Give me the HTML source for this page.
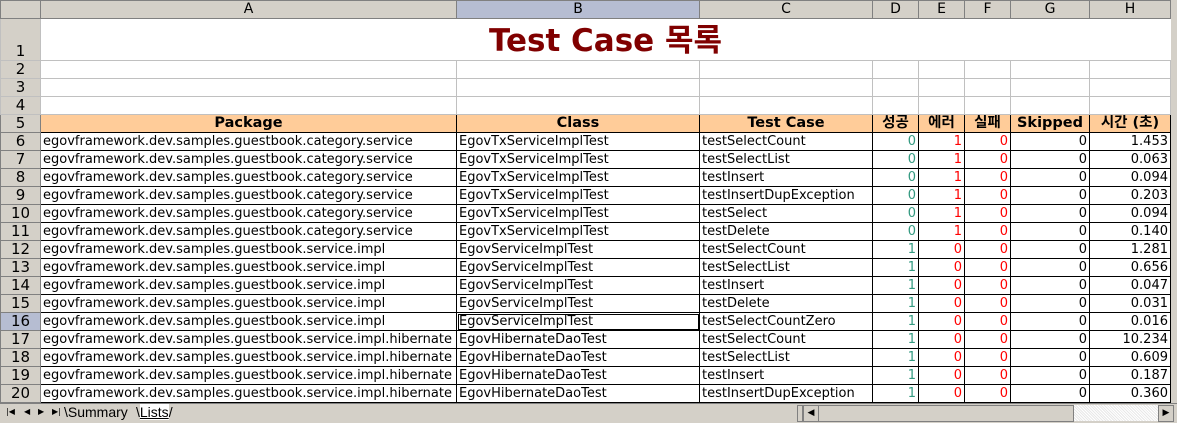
<!DOCTYPE html>
<html><head><meta charset="utf-8">
<style>
body{margin:0;width:1177px;height:422px;overflow:hidden;background:#d4d0c8;font-family:"DejaVu Sans","Noto Sans CJK KR",sans-serif;font-size:13px;}
table{position:absolute;left:0;top:0;border-collapse:collapse;table-layout:fixed;}
td{padding:0 2px;height:17px;border:1px solid #000;white-space:nowrap;overflow:hidden;line-height:17px;background:#fff;}
tr.g td{border-color:#c0c0c0;}
td.h{background:#d4d0c8;border:1px solid #808080;text-align:center;color:#000;font-size:14px;padding:0;}
td.hs{background:#b6bdd2;}
td.rh{background:#d4d0c8;border:1px solid #808080;text-align:center;font-size:15px;padding:0;}
tr.hd td.c{background:#ffcc99;font-weight:bold;text-align:center;font-size:14.5px;}
.r{text-align:right;}
.gn{color:#339980;text-align:right;}
.rd{color:#ff0000;text-align:right;}
.title{font-family:"DejaVu Sans","Noto Sans CJK KR",sans-serif;font-weight:bold;font-size:31px;color:#800000;text-align:center;vertical-align:bottom;line-height:38px;}
#bar{position:absolute;left:0;top:403px;width:1177px;height:19px;background:#d4d0c8;border-top:1px solid #808080;font-size:13px;}
</style></head><body>
<table>
<colgroup><col style="width:40px"><col style="width:416px"><col style="width:243px"><col style="width:173px"><col style="width:46px"><col style="width:46px"><col style="width:46px"><col style="width:79px"><col style="width:81px"></colgroup>
<tr><td class="h" style="height:17px"></td><td class="h">A</td><td class="h hs">B</td><td class="h">C</td><td class="h">D</td><td class="h">E</td><td class="h">F</td><td class="h">G</td><td class="h">H</td></tr>
<tr class="g"><td class="rh" style="height:41px;vertical-align:bottom">1</td><td colspan="8" class="title" style="border-color:#fff #fff #c0c0c0 #c0c0c0">Test Case 목록</td></tr>
<tr class="g"><td class="rh">2</td><td></td><td></td><td></td><td></td><td></td><td></td><td></td><td></td></tr>
<tr class="g"><td class="rh">3</td><td></td><td></td><td></td><td></td><td></td><td></td><td></td><td></td></tr>
<tr class="g"><td class="rh">4</td><td></td><td></td><td></td><td></td><td></td><td></td><td></td><td></td></tr>
<tr class="hd"><td class="rh">5</td><td class="c">Package</td><td class="c">Class</td><td class="c">Test Case</td><td class="c">성공</td><td class="c">에러</td><td class="c">실패</td><td class="c">Skipped</td><td class="c">시간 (초)</td></tr>
<tr><td class="rh">6</td><td>egovframework.dev.samples.guestbook.category.service</td><td>EgovTxServiceImplTest</td><td>testSelectCount</td><td class="gn">0</td><td class="rd">1</td><td class="rd">0</td><td class="r">0</td><td class="r">1.453</td></tr>
<tr><td class="rh">7</td><td>egovframework.dev.samples.guestbook.category.service</td><td>EgovTxServiceImplTest</td><td>testSelectList</td><td class="gn">0</td><td class="rd">1</td><td class="rd">0</td><td class="r">0</td><td class="r">0.063</td></tr>
<tr><td class="rh">8</td><td>egovframework.dev.samples.guestbook.category.service</td><td>EgovTxServiceImplTest</td><td>testInsert</td><td class="gn">0</td><td class="rd">1</td><td class="rd">0</td><td class="r">0</td><td class="r">0.094</td></tr>
<tr><td class="rh">9</td><td>egovframework.dev.samples.guestbook.category.service</td><td>EgovTxServiceImplTest</td><td>testInsertDupException</td><td class="gn">0</td><td class="rd">1</td><td class="rd">0</td><td class="r">0</td><td class="r">0.203</td></tr>
<tr><td class="rh">10</td><td>egovframework.dev.samples.guestbook.category.service</td><td>EgovTxServiceImplTest</td><td>testSelect</td><td class="gn">0</td><td class="rd">1</td><td class="rd">0</td><td class="r">0</td><td class="r">0.094</td></tr>
<tr><td class="rh">11</td><td>egovframework.dev.samples.guestbook.category.service</td><td>EgovTxServiceImplTest</td><td>testDelete</td><td class="gn">0</td><td class="rd">1</td><td class="rd">0</td><td class="r">0</td><td class="r">0.140</td></tr>
<tr><td class="rh">12</td><td>egovframework.dev.samples.guestbook.service.impl</td><td>EgovServiceImplTest</td><td>testSelectCount</td><td class="gn">1</td><td class="rd">0</td><td class="rd">0</td><td class="r">0</td><td class="r">1.281</td></tr>
<tr><td class="rh">13</td><td>egovframework.dev.samples.guestbook.service.impl</td><td>EgovServiceImplTest</td><td>testSelectList</td><td class="gn">1</td><td class="rd">0</td><td class="rd">0</td><td class="r">0</td><td class="r">0.656</td></tr>
<tr><td class="rh">14</td><td>egovframework.dev.samples.guestbook.service.impl</td><td>EgovServiceImplTest</td><td>testInsert</td><td class="gn">1</td><td class="rd">0</td><td class="rd">0</td><td class="r">0</td><td class="r">0.047</td></tr>
<tr><td class="rh">15</td><td>egovframework.dev.samples.guestbook.service.impl</td><td>EgovServiceImplTest</td><td>testDelete</td><td class="gn">1</td><td class="rd">0</td><td class="rd">0</td><td class="r">0</td><td class="r">0.031</td></tr>
<tr><td class="rh" style="background:#b6bdd2">16</td><td>egovframework.dev.samples.guestbook.service.impl</td><td style="outline:1px solid #000;outline-offset:-2px">EgovServiceImplTest</td><td>testSelectCountZero</td><td class="gn">1</td><td class="rd">0</td><td class="rd">0</td><td class="r">0</td><td class="r">0.016</td></tr>
<tr><td class="rh">17</td><td>egovframework.dev.samples.guestbook.service.impl.hibernate</td><td>EgovHibernateDaoTest</td><td>testSelectCount</td><td class="gn">1</td><td class="rd">0</td><td class="rd">0</td><td class="r">0</td><td class="r">10.234</td></tr>
<tr><td class="rh">18</td><td>egovframework.dev.samples.guestbook.service.impl.hibernate</td><td>EgovHibernateDaoTest</td><td>testSelectList</td><td class="gn">1</td><td class="rd">0</td><td class="rd">0</td><td class="r">0</td><td class="r">0.609</td></tr>
<tr><td class="rh">19</td><td>egovframework.dev.samples.guestbook.service.impl.hibernate</td><td>EgovHibernateDaoTest</td><td>testInsert</td><td class="gn">1</td><td class="rd">0</td><td class="rd">0</td><td class="r">0</td><td class="r">0.187</td></tr>
<tr><td class="rh">20</td><td>egovframework.dev.samples.guestbook.service.impl.hibernate</td><td>EgovHibernateDaoTest</td><td>testInsertDupException</td><td class="gn">1</td><td class="rd">0</td><td class="rd">0</td><td class="r">0</td><td class="r">0.360</td></tr>
</table>
<div id="bar">
<div style="position:absolute;left:6px;top:3px;font-size:8px;">|◀</div>
<div style="position:absolute;left:24px;top:3px;font-size:8px;">◀</div>
<div style="position:absolute;left:38px;top:3px;font-size:8px;">▶</div>
<div style="position:absolute;left:52px;top:3px;font-size:8px;">▶|</div>
<div style="position:absolute;left:64px;top:0;font-family:'Liberation Sans',sans-serif;font-size:14px">\Summary</div>
<div style="position:absolute;left:136px;top:0;font-family:'Liberation Sans',sans-serif;font-size:14px">\<span style="text-decoration:underline;background:#fff">Lists</span>/</div>
<div style="position:absolute;left:797px;top:1px;width:4px;height:15px;border:1px solid #808080;background:#d4d0c8"></div>
<div style="position:absolute;left:803px;top:1px;width:14px;height:15px;border:1px solid #808080;background:#d4d0c8;font-size:9px;text-align:center;line-height:15px">◀</div>
<div style="position:absolute;left:818px;top:1px;width:254px;height:15px;border:1px solid #808080;background:#d4d0c8"></div>
<div style="position:absolute;left:1074px;top:1px;width:84px;height:16px;background:repeating-linear-gradient(45deg,#e8e8e8 0 1px,#fff 1px 2px)"></div>
<div style="position:absolute;left:1158px;top:1px;width:14px;height:15px;border:1px solid #808080;background:#d4d0c8;font-size:9px;text-align:center;line-height:15px">▶</div>
</div>
</body></html>
